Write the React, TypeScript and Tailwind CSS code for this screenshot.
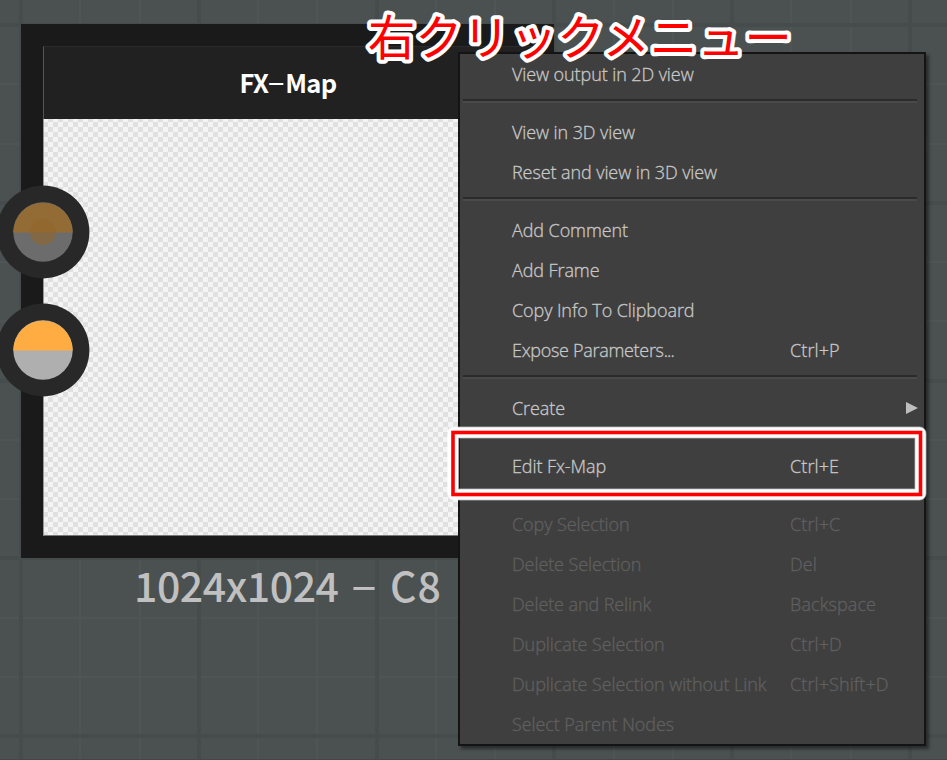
type MenuEntry = {
  label: string;
  shortcut?: string;
  disabled?: boolean;
  submenu?: boolean;
};

const menuGroups: MenuEntry[][] = [
  [{ label: "View output in 2D view" }],
  [{ label: "View in 3D view" }, { label: "Reset and view in 3D view" }],
  [
    { label: "Add Comment" },
    { label: "Add Frame" },
    { label: "Copy Info To Clipboard" },
    { label: "Expose Parameters...", shortcut: "Ctrl+P" },
  ],
  [{ label: "Create", submenu: true }],
  [{ label: "Edit Fx-Map", shortcut: "Ctrl+E" }],
  [
    { label: "Copy Selection", shortcut: "Ctrl+C", disabled: true },
    { label: "Delete Selection", shortcut: "Del", disabled: true },
    { label: "Delete and Relink", shortcut: "Backspace", disabled: true },
    { label: "Duplicate Selection", shortcut: "Ctrl+D", disabled: true },
    { label: "Duplicate Selection without Link", shortcut: "Ctrl+Shift+D", disabled: true },
    { label: "Select Parent Nodes", disabled: true },
  ],
];

const GRID_STEP = 59.26;

function GraphGrid() {
  const lines = Array.from({ length: 17 }, (_, i) => i);
  const minor = lines.filter((i) => i % 3 !== 0);
  const major = lines.filter((i) => i % 3 === 0);

  return (
    <svg className="absolute inset-0" width="947" height="760" shapeRendering="crispEdges">
      <g fill="#4f5554">
        {minor.map((i) => (
          <g key={i}>
            <rect x={Math.round(20 + i * GRID_STEP)} y="0" width="2" height="760" />
            <rect x="0" y={Math.round(24 + i * GRID_STEP)} width="947" height="2" />
          </g>
        ))}
      </g>
      <g fill="#464c4b">
        {major.map((i) => (
          <g key={i}>
            <rect x={Math.round(19 + i * GRID_STEP)} y="0" width="4" height="760" />
            <rect x="0" y={Math.round(23 + i * GRID_STEP)} width="947" height="4" />
          </g>
        ))}
      </g>
    </svg>
  );
}

function Connector({ dimmed }: { dimmed?: boolean }) {
  return (
    <svg width="94" height="94" viewBox="-47 -47 94 94">
      <circle r="46.4" fill="#282828" />
      <circle r="29.7" fill={dimmed ? "#6c6c6c" : "#afafaf"} />
      <path d="M-29.7 0.5A29.7 29.7 0 0 1 29.7 0.5Z" fill={dimmed ? "#936c35" : "#ffad42"} />
      {dimmed && <circle r="13" fill="#91662a" fillOpacity="0.6" />}
    </svg>
  );
}

function FxMapNode() {
  return (
    <div className="absolute left-[21px] top-[24px] h-[534px] w-[533px] bg-[#1a1a1a] p-[22px]">
      <div className="flex h-full flex-col">
        <div className="flex h-[73px] items-center justify-center border-l border-t border-l-[#555] border-t-[#2b2b2b] bg-[#212121]">
          <span className="-mt-[2px] font-['Noto_Sans_CJK_JP','Liberation_Sans',sans-serif] text-[25.5px] font-bold tracking-[-0.7px] text-white">
            FX
            <span className="mr-[2px] inline-block w-[15px] origin-center -translate-y-[1px] scale-x-[2] scale-y-[0.75] text-center">-</span>
            Map
          </span>
        </div>
        <div className="flex-1 border-b border-l border-b-[#777] border-l-[#999] bg-[#f4f4f4] bg-[repeating-conic-gradient(#e0e0e0_0_25%,#f4f4f4_0_50%)] bg-[length:10px_10px] bg-[position:4px_3px]" />
      </div>
      <div className="absolute left-[-25px] top-[160.6px] flex flex-col gap-[24.8px]">
        <Connector dimmed />
        <Connector />
      </div>
    </div>
  );
}

function MenuRow({ label, shortcut, disabled, submenu }: MenuEntry) {
  const dots = label.endsWith("...");

  return (
    <div
      className={`flex h-[40px] items-center pl-[52px] pr-[6px] ${
        disabled ? "text-[#606060]" : "text-[#c8c8c8]"
      }`}
    >
      <span className="-mt-[2px] w-[278px] whitespace-nowrap">
        {dots ? <span className="tracking-[-0.3px]">{label.slice(0, -3)}</span> : label}
        {dots && <span className="tracking-[-0.9px]">...</span>}
      </span>
      <span className="-mt-[2px] flex-1 whitespace-nowrap tracking-[0.1px]">{shortcut}</span>
      {submenu && (
        <svg className="-mt-[2px]" width="12" height="12" viewBox="0 0 12 12">
          <path d="M0 0L12 6L0 12Z" fill="#bebebe" />
        </svg>
      )}
    </div>
  );
}

function ContextMenu() {
  return (
    <div className="absolute left-[458px] top-[52px] h-[694px] w-[468px] border-2 border-[#141414] bg-[#3f3f3f] pt-px font-['Open_Sans','Noto_Sans',sans-serif] text-[18px] font-light tracking-[-0.09px] shadow-[3px_3px_3px_rgba(0,0,0,0.45)] [-webkit-text-stroke:0.3px]">
      {menuGroups.map((group, i) => (
        <div key={i}>
          {i > 0 && (
            <div className="flex h-[18px] flex-col pl-[3px] pr-[7px] pt-[4px]">
              <div className="h-[2px] bg-[#2b2b2b]" />
              <div className="h-[2px] bg-[#4a4a4a]" />
            </div>
          )}
          {group.map((entry) => (
            <MenuRow key={entry.label} {...entry} />
          ))}
        </div>
      ))}
    </div>
  );
}

export default function App() {
  return (
    <div className="relative h-[760px] w-[947px] overflow-hidden border-b border-[#474646] bg-[#4b5150]">
      <GraphGrid />
      <FxMapNode />
      <div className="absolute left-[134px] top-[554px] whitespace-nowrap font-['Noto_Sans_CJK_JP','Liberation_Sans',sans-serif] text-[41px] font-medium leading-[60px] tracking-[-0.45px] text-[#c0c0c0]">
        1024x1024{" "}
        <span className="ml-[3px] mr-[4px] inline-block w-[27px] -translate-y-[1px] scale-x-[1.95] scale-y-[0.85] text-center">-</span>{" "}
        <span className="tracking-[1px]">C8</span>
      </div>
      <ContextMenu />

      {/* highlight around "Edit Fx-Map" */}
      <svg className="absolute left-[440px] top-[420px]" width="500" height="90">
        <rect x="13" y="12.5" width="467.5" height="62" rx="1" fill="none" stroke="#fff" strokeOpacity="0.5" strokeWidth="12" />
        <rect x="13" y="12.5" width="467.5" height="62" rx="1" fill="none" stroke="#fff" strokeWidth="10.5" strokeLinejoin="round" />
        <rect x="13" y="12.5" width="467.5" height="62" fill="none" stroke="#f00" strokeWidth="3.6" />
      </svg>

      <svg className="absolute left-[350px] top-0" width="460" height="80">
        <text
          x="18"
          y="54.5"
          className="font-['Noto_Sans_CJK_JP',sans-serif] text-[47.3px] font-normal"
          fill="#f00"
          stroke="#fff"
          strokeWidth="8"
          strokeLinejoin="round"
          paintOrder="stroke"
        >
          右クリックメニュー
        </text>
      </svg>
    </div>
  );
}
